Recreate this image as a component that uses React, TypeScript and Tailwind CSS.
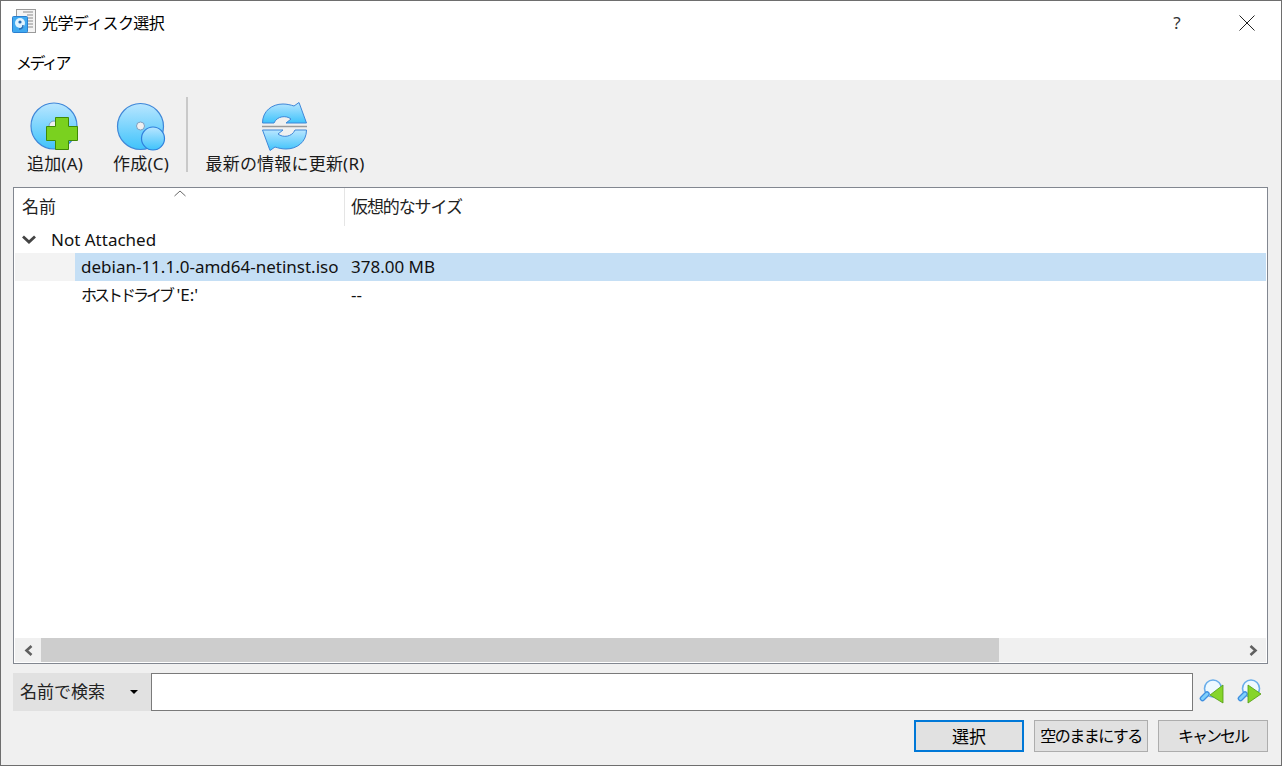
function DiscGradient({ id, flip }: { id: string; flip?: boolean }) {
  return (
    <linearGradient id={id} x1="0" y1={flip ? '1' : '0'} x2="0" y2={flip ? '0' : '1'}>
      <stop offset="0" stopColor="#b9e6ff" />
      <stop offset="1" stopColor="#3fc3fb" />
    </linearGradient>
  )
}

function AddIcon() {
  return (
    <svg width="50" height="50" viewBox="0 0 50 50">
      <defs>
        <DiscGradient id="disc-a" />
      </defs>
      <circle cx="24" cy="24" r="23" fill="url(#disc-a)" stroke="#3f87d8" strokeWidth="1.2" />
      <circle cx="24" cy="24" r="5" fill="#f0f0f0" stroke="#7d9fc0" />
      <path
        d="M26 16h13v9h9v14h-9v9H26v-9h-9V25h9z"
        transform="translate(-0.5 -0.5)"
        fill="#7ad11f"
        stroke="#3f8a05"
        strokeWidth="1"
      />
    </svg>
  )
}

function CreateIcon() {
  return (
    <svg width="50" height="50" viewBox="0 0 50 50">
      <defs>
        <DiscGradient id="disc-c" />
      </defs>
      <circle cx="24.5" cy="24.5" r="23" fill="url(#disc-c)" stroke="#3f87d8" strokeWidth="1.2" />
      <circle cx="24.5" cy="24" r="4" fill="#f0f0f0" stroke="#7d9fc0" />
      <circle cx="37" cy="36.5" r="11.5" fill="url(#disc-c)" stroke="#2f7fdc" strokeWidth="1.2" />
    </svg>
  )
}

function RefreshIcon() {
  const half = 'M0.5 21C0.5 9 10 2 21 2C25 2 29 3 32 4L37 0.5L44.5 21H24L29 17C24 13 15 14 12 21Z'
  return (
    <svg width="46" height="50" viewBox="0 0 46 50">
      <defs>
        <DiscGradient id="disc-r" />
        <DiscGradient id="disc-r2" flip />
      </defs>
      <path d={half} fill="url(#disc-r)" stroke="#3f87d8" />
      <path d={half} transform="rotate(180 22.5 24.5)" fill="url(#disc-r2)" stroke="#3f87d8" />
      <path d="M0 24.5h45" stroke="#9a9a9a" strokeWidth="1.5" />
    </svg>
  )
}

function SearchIcon({ forward }: { forward?: boolean }) {
  return (
    <svg width="26" height="26" viewBox="0 0 26 26">
      <circle cx="14" cy="9.5" r="8.5" fill="#eef9ff" stroke="#6aaeea" strokeWidth="1.6" />
      <path d="M8 15 3.5 19.5" stroke="#3f8fe0" strokeWidth="5.5" strokeLinecap="round" />
      <path d="M8 15 3.5 19.5" stroke="#7fd0fb" strokeWidth="3" strokeLinecap="round" />
      {forward ? (
        <path d="M11 6 24 15 11 24z" fill="#86d52a" stroke="#4f9a10" strokeWidth="0.8" />
      ) : (
        <path d="M24 6V24L11 16z" fill="#86d52a" stroke="#4f9a10" strokeWidth="0.8" />
      )}
    </svg>
  )
}

function ToolButton({ label, icon, className }: { label: string; icon: React.ReactNode; className: string }) {
  return (
    <div className={`flex flex-col items-center ${className}`}>
      <div className="h-[50px] flex items-center justify-center">{icon}</div>
      <span className="text-[17px] leading-[22px] tracking-[0.2px] text-[#1a1a1a] whitespace-nowrap mt-px">{label}</span>
    </div>
  )
}

function DialogButton({ label, active, className }: { label: string; active?: boolean; className: string }) {
  return (
    <button
      className={`h-[32px] bg-[#e1e1e1] text-[16px] leading-none text-black whitespace-nowrap ${
        active ? 'border-2 border-[#0078d7]' : 'border border-[#adadad]'
      } ${className}`}
    >
      {label}
    </button>
  )
}

function ScrollArrow({ dir }: { dir: 'left' | 'right' }) {
  return (
    <div className="w-[26px] flex items-center justify-center">
      <svg width="9" height="11" viewBox="0 0 9 11">
        <path
          d={dir === 'left' ? 'M7.5 1 2.5 5.5 7.5 10' : 'M1.5 1 6.5 5.5 1.5 10'}
          stroke="#606060"
          strokeWidth="2.6"
          fill="none"
        />
      </svg>
    </div>
  )
}

export default function App() {
  return (
    <div className="w-[1282px] h-[766px] flex flex-col border border-[#6e6e6e] bg-[#f0f0f0] overflow-hidden font-['Noto_Sans','Noto_Sans_CJK_JP',sans-serif] text-black">
      {/* title bar */}
      <div className="h-[44px] bg-white flex items-center shrink-0 pl-[11px]">
        <svg width="24" height="24" viewBox="0 0 24 24" className="mr-[6px] -mt-[4px]">
          <rect x="4.5" y="0.5" width="19" height="23" fill="#f4f4f4" stroke="#9a9a9a" />
          <path d="M11 3h10M15 6h6M15 9h6M15 12h6M15 15h6M15 18h6" stroke="#8a8a8a" />
          <rect x="0.5" y="7.5" width="15" height="16" rx="1" fill="#3fa9f0" stroke="#2a7fd0" />
          <circle cx="8" cy="14" r="5" fill="#dff3ff" />
          <circle cx="8" cy="13" r="1.6" fill="#2a6fb8" />
          <path d="M7 20c2 0 4-1 4-4" stroke="#2a6fb8" strokeWidth="1.5" fill="none" />
        </svg>
        <span className="text-[16px] leading-none tracking-[-0.6px]">光学ディスク選択</span>
        <span className="ml-auto w-[20px] text-center text-[17px] text-[#333]">?</span>
        <svg width="16" height="16" viewBox="0 0 16 16" className="ml-[52px] mr-[26px]">
          <path d="M.5.5l15 15M15.5.5l-15 15" stroke="#222" strokeWidth="1" fill="none" />
        </svg>
      </div>

      {/* menu */}
      <div className="h-[35px] bg-white flex items-center pl-[15px] shrink-0">
        <span className="text-[16px] leading-none tracking-[-2.5px]">メディア</span>
      </div>

      {/* toolbar */}
      <div className="h-[107px] shrink-0 flex items-start pt-[22px]">
        <ToolButton label="追加(A)" icon={<AddIcon />} className="ml-[24px] w-[60px]" />
        <ToolButton label="作成(C)" icon={<CreateIcon />} className="ml-[25px] w-[62px]" />
        <div className="w-[2px] h-[75px] bg-[#c9c9c9] ml-[14px] -mt-[5px]" />
        <ToolButton label="最新の情報に更新(R)" icon={<RefreshIcon />} className="ml-[17px] w-[160px]" />
      </div>

      {/* list */}
      <div className="ml-[12px] mr-[13px] h-[477px] shrink-0 border border-[#828790] bg-white flex flex-col">
        <div className="relative h-[38px] flex shrink-0">
          <div className="w-[331px] border-r border-[#e5e5e5] pl-[8px] flex items-center text-[17px] text-[#222]">
            名前
          </div>
          <svg width="12" height="7" viewBox="0 0 12 7" className="absolute left-[160px] top-[2px]">
            <path d="M.5 6 6 1l5.5 5" stroke="#6a6a6a" fill="none" />
          </svg>
          <div className="pl-[6px] flex items-center text-[17px] tracking-[-1.1px] text-[#222]">仮想的なサイズ</div>
        </div>
        <div className="flex-1 min-h-0 text-[17px] text-[#111] px-px">
          <div className="h-[27px] flex items-center pl-[7px]">
            <svg width="14" height="9" viewBox="0 0 14 9">
              <path d="M1 1.5 7 7l6-5.5" stroke="#444" strokeWidth="2.8" fill="none" />
            </svg>
            <span className="ml-[15px]">Not Attached</span>
          </div>
          <div className="h-[28px] flex bg-[#f3f3f3]">
            <div className="w-[60px]" />
            <div className="flex-1 flex items-center bg-[#c5dff5]">
              <span className="w-[276px] pl-[6px] whitespace-nowrap">debian-11.1.0-amd64-netinst.iso</span>
              <span>378.00 MB</span>
            </div>
          </div>
          <div className="h-[28px] flex items-center">
            <div className="w-[60px]" />
            <span className="w-[276px] pl-[6px] whitespace-nowrap">
              <span className="text-[16px] tracking-[-3px]">ホストドライブ</span> 'E:'
            </span>
            <span>--</span>
          </div>
        </div>
        <div className="h-[24px] shrink-0 flex items-stretch mx-px mb-px bg-[#f0f0f0]">
          <ScrollArrow dir="left" />
          <div className="flex-1 flex">
            <div className="w-[958px] bg-[#cdcdcd]" />
          </div>
          <ScrollArrow dir="right" />
        </div>
      </div>

      {/* search */}
      <div className="mt-[9px] ml-[12px] h-[38px] shrink-0 flex">
        <div className="w-[138px] bg-[#e1e1e1] flex items-center pl-[7px] pr-[13px] text-[17px] text-[#222]">
          <span>名前で検索</span>
          <span className="ml-auto w-0 h-0 border-x-[4px] border-x-transparent border-t-[4px] border-t-black" />
        </div>
        <div className="w-[1042px] bg-white border border-[#7a7a7a]" />
        <div className="ml-[6px] mt-[6px]">
          <SearchIcon />
        </div>
        <div className="ml-[12px] mt-[6px]">
          <SearchIcon forward />
        </div>
      </div>

      {/* buttons */}
      <div className="mt-[9px] mr-[13px] flex justify-end gap-[10px]">
        <DialogButton label="選択" active className="w-[110px] text-[17px]" />
        <DialogButton label="空のままにする" className="w-[114px] tracking-[-1.5px]" />
        <DialogButton label="キャンセル" className="w-[110px] tracking-[-2px]" />
      </div>
    </div>
  )
}
